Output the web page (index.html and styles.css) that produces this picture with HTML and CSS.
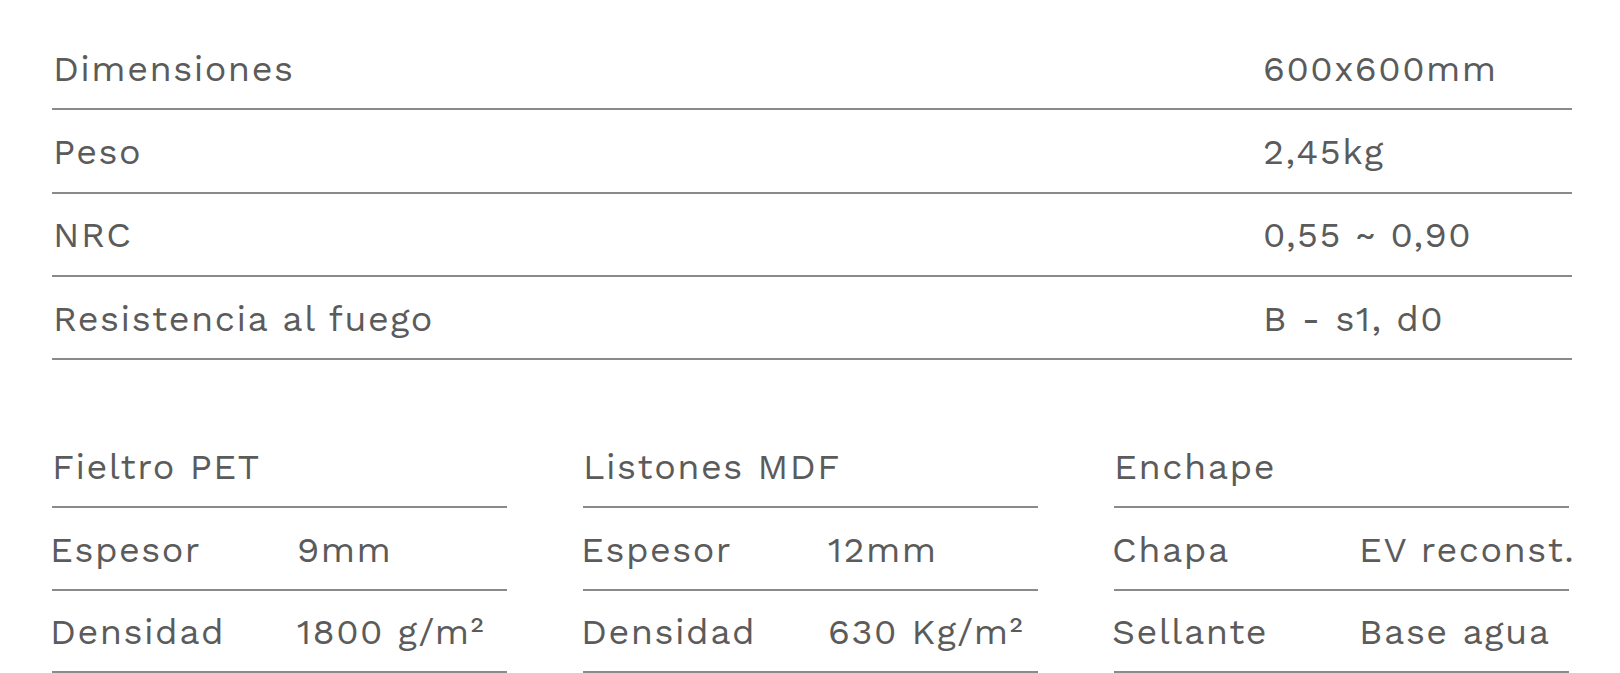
FILE: index.html
```html
<!DOCTYPE html>
<html lang="es">
<head>
<meta charset="utf-8">
<title>Especificaciones</title>
<link rel="stylesheet" href="styles.css">
</head>
<body>
<main class="page">
  <section class="specs">
    <div class="spec-row"><span class="spec-label">Dimensiones</span><span class="spec-value">600x600mm</span></div>
    <div class="spec-row"><span class="spec-label">Peso</span><span class="spec-value">2,45kg</span></div>
    <div class="spec-row"><span class="spec-label">NRC</span><span class="spec-value">0,55 ~ 0,90</span></div>
    <div class="spec-row"><span class="spec-label">Resistencia al fuego</span><span class="spec-value">B - s1, d0</span></div>
  </section>
  <section class="groups">
    <div class="group">
      <div class="group-title">Fieltro PET</div>
      <div class="group-row"><span class="cell-label">Espesor</span><span>9mm</span></div>
      <div class="group-row"><span class="cell-label">Densidad</span><span>1800 g/m²</span></div>
    </div>
    <div class="group">
      <div class="group-title">Listones MDF</div>
      <div class="group-row"><span class="cell-label">Espesor</span><span>12mm</span></div>
      <div class="group-row"><span class="cell-label">Densidad</span><span>630 Kg/m²</span></div>
    </div>
    <div class="group">
      <div class="group-title">Enchape</div>
      <div class="group-row"><span class="cell-label">Chapa</span><span class="nowrap">EV reconst.</span></div>
      <div class="group-row"><span class="cell-label">Sellante</span><span>Base agua</span></div>
    </div>
  </section>
</main>
</body>
</html>
```
FILE: styles.css
```css
html, body {
  margin: 0;
  padding: 0;
  background: #ffffff;
}

body {
  font-family: "Work Sans", "Open Sans", "Noto Sans", sans-serif;
  font-size: 36px;
  font-weight: 400;
  letter-spacing: 1.5px;
  color: #5b5b5b;
  overflow: hidden;
}

.page {
  width: 1520px;
  padding: 27px 0 0 52px;
}

.specs {
  display: flex;
  flex-direction: column;
}

.spec-row {
  display: grid;
  grid-template-columns: 1fr 310px;
  align-items: center;
  height: 83.33px;
  box-sizing: border-box;
  border-bottom: 2px solid #8a8a8a;
  padding-top: 2px;
}

.spec-label {
  padding-left: 1px;
}

.spec-value {
  padding-left: 1px;
}

.groups {
  display: grid;
  grid-template-columns: repeat(3, 455px);
  column-gap: 76px;
  margin-top: 65px;
}

.group {
  display: flex;
  flex-direction: column;
}

.group-title,
.group-row {
  height: 82.6px;
  box-sizing: border-box;
  border-bottom: 2px solid #8a8a8a;
  display: grid;
  align-items: center;
  padding-top: 3px;
}

.group-row {
  grid-template-columns: 245px 1fr;
}

.cell-label {
  margin-left: -2px;
}

.nowrap {
  white-space: nowrap;
}
```
